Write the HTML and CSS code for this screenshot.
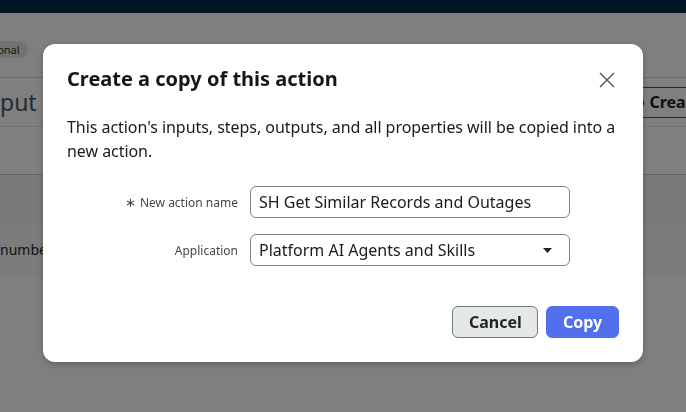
FILE: index.html
```html
<!DOCTYPE html>
<html lang="en">
<head>
<meta charset="utf-8">
<title>Create a copy of this action</title>
<link rel="stylesheet" href="styles.css">
</head>
<body>
<div class="page">
  <header class="nav"></header>
  <div class="meta">
    <span class="pill">Optional</span>
  </div>
  <div class="toolbar">
    <h2 class="section-title">Input</h2>
    <button class="create-btn"><span class="plus">⊕</span> Create input</button>
  </div>
  <div class="spacer"></div>
  <div class="table">
    <div class="thead"></div>
    <div class="trow"><span class="cell">number</span></div>
  </div>
</div>

<div class="backdrop">
  <div class="dialog" role="dialog">
    <div class="dialog-head">
      <h1 class="dialog-title">Create a copy of this action</h1>
      <button class="close" aria-label="Close">
        <svg width="16" height="16" viewBox="0 0 16 16"><path d="M1 1 L15 15 M15 1 L1 15" stroke="#4a4f52" stroke-width="1.3" fill="none"/></svg>
      </button>
    </div>
    <p class="dialog-text">This action's inputs, steps, outputs, and all properties will be copied into a new action.</p>
    <div class="form">
      <label class="label"><span class="req">∗</span> New action name</label>
      <div class="field">SH Get Similar Records and Outages</div>
      <label class="label">Application</label>
      <div class="field select">Platform AI Agents and Skills
        <svg class="caret" width="9" height="5" viewBox="0 0 9 5"><path d="M0 0 H9 L4.5 5 Z" fill="#1f2326"/></svg>
      </div>
    </div>
    <div class="actions">
      <button class="btn btn-secondary">Cancel</button>
      <button class="btn btn-primary">Copy</button>
    </div>
  </div>
</div>
</body>
</html>
```

FILE: styles.css
```css
* { box-sizing: border-box; }

html, body {
  margin: 0;
  padding: 0;
}

body {
  width: 686px;
  height: 412px;
  overflow: hidden;
  font-family: "Noto Sans", "Open Sans", sans-serif;
  color: #181a1c;
  background: #ffffff;
}

.page {
  display: flex;
  flex-direction: column;
}

.nav {
  height: 13px;
  background: #032c48;
}

.meta {
  height: 65px;
  padding-top: 24px;
  border-bottom: 1px solid #d8d9d9;
}

.pill {
  display: inline-block;
  margin-left: -33px;
  height: 17px;
  padding: 0 8px;
  border-radius: 9px;
  background: #e3e4e4;
  font-size: 11px;
  line-height: 17px;
  color: #2b3033;
}

.toolbar {
  height: 49px;
  display: flex;
  align-items: center;
  justify-content: space-between;
  border-bottom: 1px solid #e8e9e9;
}

.section-title {
  margin: 0 0 0 -22px;
  font-size: 23px;
  font-weight: 400;
  color: #46575f;
}

.create-btn {
  margin-right: -76px;
  height: 31px;
  padding: 0 12px;
  border: 1px solid #4b5356;
  border-radius: 6px;
  background: #ffffff;
  font-family: inherit;
  font-size: 16px;
  font-weight: 700;
  color: #1f2326;
}

.plus {
  font-weight: 400;
}

.spacer {
  height: 48px;
  border-bottom: 1px solid #c9cbcc;
}

.thead {
  height: 50px;
  background: #f2f3f3;
  border-bottom: 1px solid #f7f7f7;
}

.trow {
  height: 50px;
  display: flex;
  align-items: center;
  background: #f9f9f9;
  border-bottom: 1px solid #eeeeee;
}

.cell {
  font-size: 14px;
  color: #1f2326;
}

.backdrop {
  position: fixed;
  inset: 0;
  background: rgba(0, 0, 0, 0.5);
  display: flex;
  justify-content: center;
  align-items: flex-start;
  padding-top: 44px;
}

.dialog {
  width: 600px;
  height: 318px;
  background: #ffffff;
  border-radius: 12px;
  box-shadow: 0 2px 6px rgba(0, 0, 0, 0.25);
  padding: 21px 24px 24px;
  display: flex;
  flex-direction: column;
}

.dialog-head {
  display: flex;
  justify-content: space-between;
  align-items: flex-start;
}

.dialog-title {
  margin: 0;
  font-size: 20px;
  line-height: 28px;
  font-weight: 700;
  color: #14171a;
}

.close {
  margin: 7px 4px 0 0;
  padding: 0;
  border: none;
  background: none;
  width: 16px;
  height: 16px;
  display: flex;
}

.dialog-text {
  margin: 22px 0 0;
  font-size: 16px;
  line-height: 24px;
  letter-spacing: -0.05px;
  color: #181a1c;
}

.form {
  margin-top: 23px;
  display: grid;
  grid-template-columns: 171px 320px;
  column-gap: 12px;
  row-gap: 16px;
  align-items: center;
}

.label {
  justify-self: end;
  font-size: 12px;
  color: #40474b;
}

.req {
  font-size: 13px;
  color: #40474b;
  margin-right: 1px;
}

.field {
  height: 32px;
  border: 1px solid #7d868a;
  border-radius: 6px;
  padding: 0 8px;
  font-size: 16px;
  line-height: 30px;
  color: #181a1c;
  display: flex;
  align-items: center;
}

.select {
  justify-content: space-between;
}

.caret {
  margin-right: 9px;
}

.actions {
  margin-top: auto;
  display: flex;
  justify-content: flex-end;
  gap: 8px;
}

.btn {
  height: 32px;
  border-radius: 6px;
  font-family: inherit;
  font-size: 16px;
  font-weight: 700;
  padding: 0 16px;
}

.btn-secondary {
  width: 86px;
  background: #e6e8e8;
  border: 1px solid #6e7b80;
  color: #1f2326;
}

.btn-primary {
  width: 73px;
  background: #5270ee;
  border: 1px solid #5270ee;
  color: #ffffff;
}
```
